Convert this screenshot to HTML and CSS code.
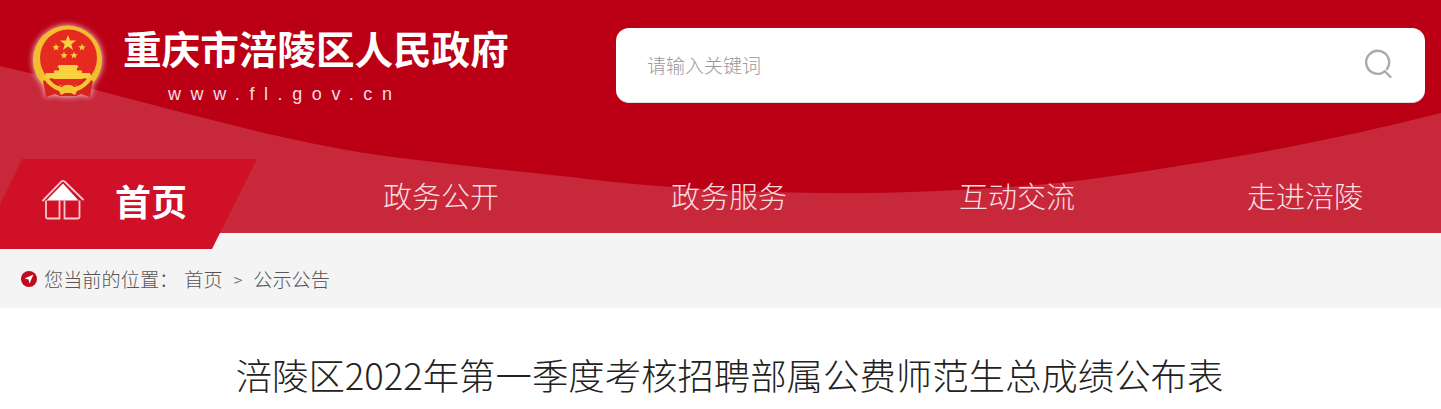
FILE: index.html
```html
<!DOCTYPE html>
<html lang="zh-CN">
<head>
    <meta charset="UTF-8">
    <meta name="viewport" content="width=device-width, initial-scale=1.0">
    <title>涪陵区2022年第一季度考核招聘部属公费师范生总成绩公布表</title>
    <link rel="stylesheet" href="styles.css">
</head>
<body>
    <header class="header">
        <svg class="header-bg" viewBox="0 0 1441 233" preserveAspectRatio="none" aria-hidden="true">
            <path d="M0 0H1441V113C1370 131 1290 148 1216 160C1160 169 1110 177 1058 183C980 190 900 194 820 193C740 192 670 188 595 180C510 170 430 163 358 152C300 142 250 130 200 117C130 99 60 80 0 66Z" fill="#bb0015"/>
        </svg>
        <div class="header-top">
            <a class="logo" href="#">
                <svg class="emblem" viewBox="25 20 85 85" aria-hidden="true">
                    <circle cx="67.500" cy="60" r="34.500" fill="#f2bd2f"/>
                    <circle cx="68.500" cy="58" r="28.500" fill="#e62a20"/>
                    <polygon fill="#f7d23e" points="68,35 70.100,40.500 76,40.500 71.300,44.200 73,50 68,46.600 63,50 64.700,44.200 60,40.500 65.900,40.500"/>
                    <polygon fill="#f7d23e" points="56,43.500 57,46.200 59.800,46.200 57.600,47.900 58.300,50.500 56,49 53.700,50.500 54.400,47.900 52.200,46.200 55,46.200"/>
                    <polygon fill="#f7d23e" points="82,43.500 83,46.200 85.800,46.200 83.600,47.900 84.300,50.500 82,49 79.700,50.500 80.400,47.900 78.200,46.200 81,46.200"/>
                    <polygon fill="#f7d23e" points="64,51.500 65,54.200 67.800,54.200 65.600,55.900 66.300,58.500 64,57 61.700,58.500 62.400,55.900 60.200,54.200 63,54.200"/>
                    <polygon fill="#f7d23e" points="74,51.500 75,54.200 77.800,54.200 75.600,55.900 76.300,58.500 74,57 71.700,58.500 72.400,55.900 70.200,54.200 73,54.200"/>
                    <path d="M59 65h18l2 2.500h-2v3h5v2.500h8l2 6H44l2-6h8v-2.500h5v-3h-2Z" fill="#f7d23e"/>
                    <path d="M43 81l9-3 8 8 8-2 8 2 8-8 9 3-3 16-9-3-5 2H60l-5-2-9 3Z" fill="#d8241d"/>
                    <path d="M47 76c4 6 9 10 15 11 2-3 10-3 12 0 6-1 11-5 15-11l3 3c-4 6-9 10-15 12l-2 4-4-2h-6l-4 2-2-4c-6-2-11-6-15-12Z" fill="#f4c534"/>
                </svg>
                <span class="logo-text">
                    <span class="logo-name">重庆市涪陵区人民政府</span>
                    <span class="logo-url">www.fl.gov.cn</span>
                </span>
            </a>
            <form class="search" onsubmit="return false">
                <input class="search-input" type="text" placeholder="请输入关键词">
                <svg class="search-icon" viewBox="0 0 32 32" aria-hidden="true">
                    <path d="M21.500 23.200A11.500 11.500 0 1 1 25 20" fill="none" stroke="#aaa" stroke-width="2.400" stroke-linecap="round"/>
                    <path d="M22.500 22l6 6" fill="none" stroke="#aaa" stroke-width="2.400" stroke-linecap="round"/>
                </svg>
            </form>
        </div>
        <nav class="nav">
            <a class="nav-home" href="#">
                <svg class="home-icon" viewBox="0 0 42 42" aria-hidden="true">
                    <path d="M1 21.500 19.500 2.500a2 2 0 0 1 3 0L41 20.500" fill="none" stroke="#f7c9cf" stroke-width="1.800" stroke-linecap="round"/>
                    <path d="M4.500 21.500 21 4.500 36.500 21.500Z" fill="#fff"/>
                    <path d="M4 21.500V38a1.500 1.500 0 0 0 1.500 1.500H17.500V21.500M22.500 21.500V39.500H36a1.500 1.500 0 0 0 1.500-1.500V21.500" fill="none" stroke="#f7c9cf" stroke-width="1.800"/>
                </svg>
                <span class="nav-home-label">首页</span>
            </a>
            <div class="nav-links">
                <a href="#">政务公开</a>
                <a href="#">政务服务</a>
                <a href="#">互动交流</a>
                <a href="#">走进涪陵</a>
            </div>
        </nav>
    </header>

    <div class="crumbs">
        <svg class="crumbs-icon" viewBox="0 0 16 16" aria-hidden="true">
            <circle cx="8" cy="8" r="8" fill="#bf0a1e"/>
            <path d="M12.500 3.500 3.500 7.500 7.500 8.500 8.500 12.500Z" fill="#fff"/>
        </svg>
        <span class="crumbs-label">您当前的位置：</span>
        <a href="#">首页</a>
        <span class="crumbs-sep">&gt;</span>
        <a href="#">公示公告</a>
    </div>

    <main class="article">
        <h1>涪陵区2022年第一季度考核招聘部属公费师范生总成绩公布表</h1>
    </main>
</body>
</html>
```

FILE: styles.css
```css
* {
    box-sizing: border-box;
}
html, body {
    height: 100%;
}
body {
    margin: 0;
    overflow: hidden;
    background: #ffffff;
    font-family: "Noto Sans CJK SC", "Liberation Sans", sans-serif;
    color: #333333;
}
a {
    color: inherit;
    text-decoration: none;
}

/* header */
.header {
    position: relative;
    height: 233px;
    background: #c7293b;
}
.header-bg {
    position: absolute;
    top: 0;
    left: 0;
    width: 100%;
    height: 100%;
}
.header-top {
    position: relative;
    display: flex;
    align-items: flex-start;
    height: 159px;
    padding: 20px 16px 0 25px;
}
.logo {
    display: flex;
    width: 591px;
    color: #ffffff;
}
.emblem {
    flex: none;
    width: 85px;
    height: 85px;
    margin-right: 13px;
    filter: drop-shadow(0 0 3px rgba(255, 255, 255, 0.85));
}
.logo-text {
    display: flex;
    flex-direction: column;
    align-items: flex-start;
}
.logo-name {
    margin-top: -1px;
    font-size: 38.600px;
    font-weight: bold;
    line-height: 56px;
}
.logo-url {
    margin: 7px 0 0 45px;
    font-family: "Liberation Sans", sans-serif;
    font-size: 18px;
    line-height: 24px;
    letter-spacing: 9.600px;
    color: #f6dfe2;
}
.search {
    display: flex;
    align-items: center;
    width: 809px;
    height: 75px;
    margin-top: 8px;
    padding: 0 31px;
    background: #ffffff;
    border-bottom: 1px solid #dddddd;
    border-radius: 13px;
}
.search-input {
    flex: 1;
    min-width: 0;
    padding: 0 0 2px;
    border: none;
    outline: none;
    background: transparent;
    font-family: inherit;
    font-size: 19px;
    font-weight: 300;
    color: #333333;
}
.search-input::placeholder {
    color: #999999;
    opacity: 1;
}
.search-icon {
    flex: none;
    width: 32px;
    height: 32px;
}

/* nav */
.nav {
    position: relative;
    display: flex;
    height: 74px;
}
.nav-home {
    display: flex;
    align-items: center;
    flex: none;
    width: 257px;
    height: 90px;
    padding: 0 0 8px 42px;
    background: #d01027;
    clip-path: polygon(22px 0, 100% 0, 212px 100%, 0 100%, 0 46px);
    color: #ffffff;
}
.home-icon {
    flex: none;
    width: 42px;
    height: 42px;
    margin-right: 31px;
}
.nav-home-label {
    font-size: 36px;
    font-weight: bold;
}
.nav-links {
    display: flex;
    gap: 172px;
    margin-left: 126px;
    padding-top: 14px;
    font-size: 29px;
    font-weight: 300;
    line-height: 44px;
    color: #fbdde1;
}

/* breadcrumb */
.crumbs {
    display: flex;
    align-items: center;
    height: 75px;
    padding: 16px 0 0 21px;
    background: #f4f4f4;
    font-size: 19.200px;
    font-weight: 300;
    color: #555555;
}
.crumbs-icon {
    width: 16px;
    height: 16px;
    margin-right: 7px;
}
.crumbs-label {
    margin-right: 6px;
}
.crumbs-sep {
    margin: 0 11px;
    font-size: 16px;
}

/* article */
.article {
    padding-top: 41px;
    padding-left: 18px;
    text-align: center;
}
.article h1 {
    margin: 0;
    font-size: 36.400px;
    font-weight: 300;
    line-height: 50px;
    white-space: nowrap;
    color: #222222;
}
```
